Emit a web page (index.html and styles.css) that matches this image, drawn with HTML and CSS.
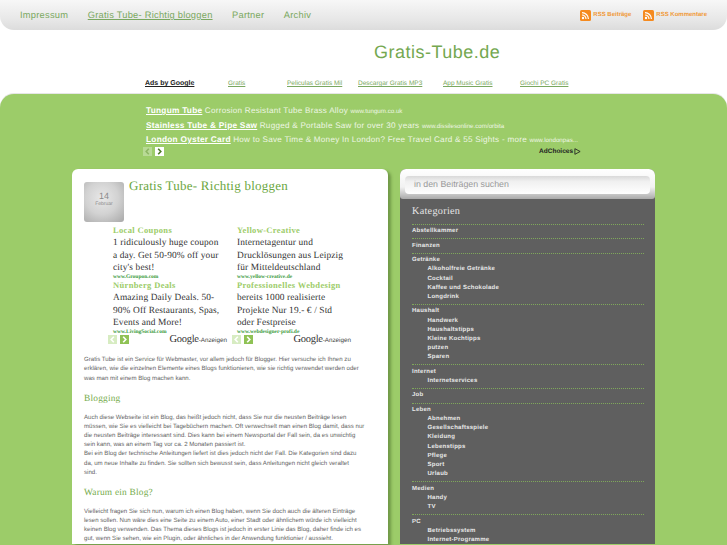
FILE: index.html
```html
<!DOCTYPE html>
<html lang="de">
<head>
    <meta charset="UTF-8">
    <title>Gratis-Tube.de</title>
    <link rel="stylesheet" href="styles.css">
</head>
<body>

<div class="topbar">
    <nav class="mainnav">
        <a href="#">Impressum</a>
        <a href="#" class="current">Gratis Tube- Richtig bloggen</a>
        <a href="#">Partner</a>
        <a href="#">Archiv</a>
    </nav>
    <div class="feeds">
        <a href="#"><svg class="rss" viewBox="0 0 11 11"><rect width="11" height="11" rx="1.5" fill="#f58a1f"/><circle cx="3" cy="8" r="1.2" fill="#fff"/><path d="M2 5a4 4 0 0 1 4 4M2 2.6a6.4 6.4 0 0 1 6.4 6.4" fill="none" stroke="#fff" stroke-width="1.2"/></svg>RSS Beiträge</a>
        <a href="#"><svg class="rss" viewBox="0 0 11 11"><rect width="11" height="11" rx="1.5" fill="#f58a1f"/><circle cx="3" cy="8" r="1.2" fill="#fff"/><path d="M2 5a4 4 0 0 1 4 4M2 2.6a6.4 6.4 0 0 1 6.4 6.4" fill="none" stroke="#fff" stroke-width="1.2"/></svg>RSS Kommentare</a>
    </div>
</div>

<div class="sitetitle">Gratis-Tube.de</div>

<div class="adlinks">
    <b>Ads by Google</b>
    <a href="#" class="w1">Gratis</a>
    <a href="#" class="w2">Peliculas Gratis Mil</a>
    <a href="#" class="w3">Descargar Gratis MP3</a>
    <a href="#" class="w4">App Music Gratis</a>
    <a href="#">Giochi PC Gratis</a>
</div>

<div class="green">
    <div class="textads">
        <p><a href="#">Tungum Tube</a> Corrosion Resistant Tube Brass Alloy <small>www.tungum.co.uk</small></p>
        <p><a href="#">Stainless Tube &amp; Pipe Saw</a> Rugged &amp; Portable Saw for over 30 years <small>www.dissilesonline.com/orbita</small></p>
        <p><a href="#">London Oyster Card</a> How to Save Time &amp; Money In London? Free Travel Card &amp; 55 Sights - more <small>www.londonpas...</small></p>
        <div class="adfoot">
            <span class="arrows">
                <i class="off"><svg viewBox="0 0 9 9"><path d="M5.8 1.8 3.2 4.5l2.6 2.7"/></svg></i>
                <i class="on"><svg viewBox="0 0 9 9"><path d="M3.2 1.8 5.8 4.5 3.2 7.2"/></svg></i>
            </span>
            <span class="adchoices">AdChoices <svg viewBox="0 0 8 8"><path d="M1 .8 7 4 1 7.2z" fill="none" stroke="#222" stroke-width="1"/></svg></span>
        </div>
    </div>

    <div class="columns">
        <div class="post">
            <div class="posthead">
                <div class="date"><span>14</span><small>Februar</small></div>
                <h1>Gratis Tube- Richtig bloggen</h1>
            </div>

            <div class="adunits">
                <div class="adunit">
                    <h4>Local Coupons</h4>
                    <p>1 ridiculously huge coupon a day. Get 50-90% off your city's best!</p>
                    <a href="#">www.Groupon.com</a>
                    <h4>Nürnberg Deals</h4>
                    <p>Amazing Daily Deals. 50-90% Off Restaurants, Spas, Events and More!</p>
                    <a href="#">www.LivingSocial.com</a>
                    <div class="unitfoot">
                        <span class="arrows light">
                            <i class="off"><svg viewBox="0 0 9 9"><path d="M5.8 1.8 3.2 4.5l2.6 2.7"/></svg></i>
                            <i class="on"><svg viewBox="0 0 9 9"><path d="M3.2 1.8 5.8 4.5 3.2 7.2"/></svg></i>
                        </span>
                        <span class="gads"><b>Google</b>-Anzeigen</span>
                    </div>
                </div>
                <div class="adunit">
                    <h4>Yellow-Creative</h4>
                    <p>Internetagentur und Drucklösungen aus Leipzig für Mitteldeutschland</p>
                    <a href="#">www.yellow-creative.de</a>
                    <h4>Professionelles Webdesign</h4>
                    <p>bereits 1000 realisierte Projekte Nur 19.- € / Std oder Festpreise</p>
                    <a href="#">www.webdesigner-profi.de</a>
                    <div class="unitfoot">
                        <span class="arrows light">
                            <i class="off"><svg viewBox="0 0 9 9"><path d="M5.8 1.8 3.2 4.5l2.6 2.7"/></svg></i>
                            <i class="on"><svg viewBox="0 0 9 9"><path d="M3.2 1.8 5.8 4.5 3.2 7.2"/></svg></i>
                        </span>
                        <span class="gads"><b>Google</b>-Anzeigen</span>
                    </div>
                </div>
            </div>

            <p>Gratis Tube ist ein Service für Webmaster, vor allem jedoch für Blogger. Hier versuche ich Ihnen zu<br>erklären, wie die einzelnen Elemente eines Blogs funktionieren, wie sie richtig verwendet werden oder<br>was man mit einem Blog machen kann.</p>
            <h2>Blogging</h2>
            <p>Auch diese Webseite ist ein Blog, das heißt jedoch nicht, dass Sie nur die neusten Beiträge lesen<br>müssen, wie Sie es vielleicht bei Tagebüchern machen. Oft verwechselt man einen Blog damit, dass nur<br>die neusten Beiträge interessant sind. Dies kann bei einem Newsportal der Fall sein, da es unwichtig<br>sein kann, was an einem Tag vor ca. 2 Monaten passiert ist.<br>Bei ein Blog der technische Anleitungen liefert ist dies jedoch nicht der Fall. Die Kategorien sind dazu<br>da, um neue Inhalte zu finden. Sie sollten sich bewusst sein, dass Anleitungen nicht gleich veraltet<br>sind.</p>
            <h2>Warum ein Blog?</h2>
            <p>Vielleicht fragen Sie sich nun, warum ich einen Blog haben, wenn Sie doch auch die älteren Einträge<br>lesen sollen. Nun wäre dies eine Seite zu einem Auto, einer Stadt oder ähnlichem würde ich vielleicht<br>keinen Blog verwenden. Das Thema dieses Blogs ist jedoch in erster Linie das Blog, daher finde ich es<br>gut, wenn Sie sehen, wie ein Plugin, oder ähnliches in der Anwendung funktionier / aussieht.</p>
        </div>

        <div class="sidebar">
            <div class="searchwrap">
                <div class="searchbox">in den Beiträgen suchen</div>
            </div>
            <h3>Kategorien</h3>
            <ul class="cats">
                <li>Abstellkammer</li>
                <li>Finanzen</li>
                <li>Getränke
                    <ul>
                        <li>Alkoholfreie Getränke</li>
                        <li>Cocktail</li>
                        <li>Kaffee und Schokolade</li>
                        <li>Longdrink</li>
                    </ul>
                </li>
                <li>Haushalt
                    <ul>
                        <li>Handwerk</li>
                        <li>Haushaltstipps</li>
                        <li>Kleine Kochtipps</li>
                        <li>putzen</li>
                        <li>Sparen</li>
                    </ul>
                </li>
                <li>Internet
                    <ul>
                        <li>Internetservices</li>
                    </ul>
                </li>
                <li>Job</li>
                <li>Leben
                    <ul>
                        <li>Abnehmen</li>
                        <li>Gesellschaftsspiele</li>
                        <li>Kleidung</li>
                        <li>Lebenstipps</li>
                        <li>Pflege</li>
                        <li>Sport</li>
                        <li>Urlaub</li>
                    </ul>
                </li>
                <li>Medien
                    <ul>
                        <li>Handy</li>
                        <li>TV</li>
                    </ul>
                </li>
                <li>PC
                    <ul>
                        <li>Betriebssystem</li>
                        <li>Internet-Programme</li>
                    </ul>
                </li>
            </ul>
        </div>
    </div>
</div>

</body>
</html>
```

FILE: styles.css
```css
html, body {
    margin: 0;
    height: 100%;
    overflow: hidden;
}
body {
    font-family: 'Liberation Sans', Arial, sans-serif;
    background-color: #fff;
    display: flex;
    flex-direction: column;
    text-rendering: geometricPrecision;
}
a {
    color: inherit;
}
p {
    margin: 0;
}

.topbar {
    height: 30px;
    flex: none;
    display: flex;
    justify-content: space-between;
    align-items: center;
    background: linear-gradient(#f7f7f7, #e6e6e6 70%, #dcdcdc);
    border-radius: 0 0 14px 14px;
}
.mainnav {
    display: flex;
    gap: 19.5px;
    padding-left: 20px;
    font-size: 9.3px;
    letter-spacing: 0.25px;
    color: #7aa860;
}
.mainnav a {
    text-decoration: none;
}
.mainnav a.current {
    text-decoration: underline;
}
.feeds {
    display: flex;
    gap: 12px;
    padding-right: 20px;
    font-size: 6px;
    font-weight: bold;
    color: #f09a3a;
}
.feeds a {
    display: flex;
    align-items: center;
    gap: 2px;
    text-decoration: none;
}
.rss {
    width: 11px;
    height: 11px;
}

.sitetitle {
    height: 37px;
    padding: 12px 0 0 374px;
    font-size: 18px;
    line-height: 20px;
    letter-spacing: 0.5px;
    color: #74a850;
    flex: none;
}

.adlinks {
    flex: none;
    height: 15px;
    display: flex;
    padding-left: 145px;
    font-size: 6.5px;
    line-height: 9px;
    color: #7aa860;
}
.adlinks b {
    width: 83px;
    font-size: 7px;
    color: #222;
    text-decoration: underline;
}
.adlinks .w1 { width: 59px; }
.adlinks .w2 { width: 71px; }
.adlinks .w3 { width: 85px; }
.adlinks .w4 { width: 77px; }

.green {
    flex: 1;
    min-height: 0;
    background-color: #9ccc69;
    border-radius: 14px 14px 0 0;
    box-shadow: 0 -1px 0 #e6e6e6;
    padding-top: 9px;
}
.textads {
    width: 435px;
    margin-left: 146px;
    color: #eef6e4;
    font-size: 8.15px;
    letter-spacing: 0.25px;
}
.textads p {
    height: 14.6px;
    line-height: 14.6px;
    white-space: nowrap;
}
.textads a {
    font-size: 8.3px;
    font-weight: bold;
    color: #fff;
}
.textads small {
    font-size: 6.2px;
    letter-spacing: 0;
}
.adfoot {
    display: flex;
    justify-content: space-between;
    align-items: center;
    height: 10px;
}
.arrows {
    display: flex;
    gap: 3px;
    margin-left: -3px;
}
.arrows i {
    display: block;
    width: 9px;
    height: 9px;
}
.arrows svg {
    display: block;
    width: 9px;
    height: 9px;
    fill: none;
    stroke-width: 1.6;
}
.arrows .off {
    background-color: #b8da95;
    stroke: #8db663;
}
.arrows .on {
    background-color: #fff;
    stroke: #4d7a26;
}
.arrows.light {
    margin-left: 0;
}
.arrows.light .off {
    background-color: #d7ecc2;
    stroke: #fff;
}
.arrows.light .on {
    background-color: #8fc255;
    stroke: #fff;
}
.adchoices {
    display: flex;
    align-items: center;
    gap: 1px;
    font-size: 6.5px;
    font-weight: bold;
    letter-spacing: 0;
    color: #222;
}
.adchoices svg {
    width: 7px;
    height: 7px;
}

.columns {
    display: flex;
    align-items: flex-start;
    gap: 12px;
    margin: 12.5px 0 0 72px;
}

.post {
    width: 316px;
    height: 375px;
    box-sizing: border-box;
    flex: none;
    padding: 12.7px 12px 0;
    background-color: #fff;
    border-radius: 6px 6px 0 0;
    box-shadow: 3px 2px 3px rgba(60, 90, 30, 0.45);
    font-size: 6.1px;
    line-height: 9.15px;
    color: #666;
}
.posthead {
    display: flex;
    gap: 5px;
    height: 42px;
}
.date {
    width: 40px;
    height: 40px;
    box-sizing: border-box;
    padding-bottom: 4px;
    flex: none;
    display: flex;
    flex-direction: column;
    align-items: center;
    justify-content: center;
    background: radial-gradient(circle at 45% 40%, #e8e8e8, #d2d2d2 50%, #a8a8a8);
    border-radius: 3px;
    color: #8a8a8a;
    font-size: 9px;
    line-height: 10px;
}
.date small {
    font-size: 5px;
    line-height: 7px;
}
.post h1 {
    margin: -5px 0 0;
    font: normal 13px/18px 'Liberation Serif', serif;
    letter-spacing: 0.25px;
    color: #6aa63e;
}
.post h2 {
    margin: 10px 0 7px;
    font: normal 9.4px/13px 'Liberation Serif', serif;
    letter-spacing: 0.2px;
    color: #76ac4c;
}

.adunits {
    display: flex;
    height: 130.5px;
    margin: 0.8px 0 0 29px;
    font-family: 'Liberation Serif', serif;
}
.adunit {
    width: 124px;
    flex: none;
}
.adunit h4 {
    margin: 0;
    font-size: 8.5px;
    line-height: 10px;
    letter-spacing: 0.35px;
    color: #9ccc69;
}
.adunit p {
    width: 107px;
    font-size: 9.4px;
    line-height: 12.2px;
    letter-spacing: 0.12px;
    color: #333;
    margin-top: 2.6px;
}
.adunit a {
    display: block;
    margin-bottom: -0.1px;
    font-size: 5.5px;
    line-height: 6px;
    font-weight: bold;
    color: #3a9a3a;
    text-decoration: none;
}
.unitfoot {
    display: flex;
    justify-content: space-between;
    align-items: center;
    width: 119px;
    height: 9px;
    margin-left: -5px;
}
.gads {
    font: 6.3px 'Liberation Sans', sans-serif;
    color: #444;
}
.gads b {
    font: normal 10.5px 'Liberation Serif', serif;
    letter-spacing: -0.3px;
    color: #333;
}

.sidebar {
    width: 255px;
    height: 375px;
    flex: none;
    background-color: #5f5f5f;
    border-radius: 6px 6px 0 0;
    color: #e8e8e8;
}
.searchwrap {
    height: 30px;
    box-sizing: border-box;
    padding: 6.5px 5px 0;
    background: linear-gradient(#fff, #f2f2f2 60%, #aaa);
    border-radius: 6px 6px 3px 3px;
}
.searchbox {
    height: 18px;
    padding-left: 9px;
    background: linear-gradient(#d9d9d9, #f0f0f0 30%, #fff);
    border-radius: 4px;
    font-size: 8.8px;
    line-height: 17px;
    color: #999;
}
.sidebar h3 {
    margin: 5.5px 0 0 12px;
    font: normal 10.2px/13px 'Liberation Serif', serif;
    letter-spacing: 0.3px;
    color: #e6e6e6;
}
.cats {
    list-style: none;
    margin: 6px 11px 0 12px;
    padding: 0;
    font-size: 6px;
    font-weight: bold;
    line-height: 9.15px;
    letter-spacing: 0.25px;
}
.cats > li {
    border-top: 1px dotted #7fa85a;
    padding: 2.4px 0 2px;
}
.cats ul {
    list-style: none;
    margin: 0;
    padding: 0 0 0 15.5px;
}
```
